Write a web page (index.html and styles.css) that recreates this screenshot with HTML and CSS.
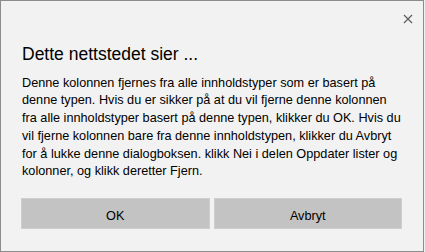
FILE: index.html
```html
<!DOCTYPE html>
<html lang="nb">
<head>
  <meta charset="UTF-8">
  <meta name="viewport" content="width=device-width, initial-scale=1.0">
  <title>Dette nettstedet sier</title>
  <link rel="stylesheet" href="styles.css">
</head>
<body>
  <div class="dialog">
    <div class="topbar">
      <button class="close" aria-label="Lukk">
        <svg width="10" height="10" viewBox="0 0 10 10">
          <path d="M1 1 L9 9 M9 1 L1 9" stroke="#5a5a5a" stroke-width="1.1" fill="none"/>
        </svg>
      </button>
    </div>
    <h1 class="title">Dette nettstedet sier ...</h1>
    <p class="message">Denne kolonnen fjernes fra alle innholdstyper som er basert på denne typen. Hvis du er sikker på at du vil fjerne denne kolonnen fra alle innholdstyper basert på denne typen, klikker du OK. Hvis du vil fjerne kolonnen bare fra denne innholdstypen, klikker du Avbryt for å lukke denne dialogboksen. klikk Nei i delen Oppdater lister og kolonner, og klikk deretter Fjern.</p>
    <div class="buttons">
      <button class="btn">OK</button>
      <button class="btn">Avbryt</button>
    </div>
  </div>
</body>
</html>
```

FILE: styles.css
```css
body {
  margin: 0;
  padding: 0;
  font-family: "Liberation Sans", Arial, sans-serif;
  background-color: #f2f2f2;
}

.dialog {
  box-sizing: border-box;
  width: 424px;
  height: 252px;
  border: 1px solid #8c8c8c;
  background-color: #f2f2f2;
  padding: 0 20px 0 21px;
}

.topbar {
  display: flex;
  justify-content: flex-end;
  box-sizing: border-box;
  height: 42px;
  padding-top: 13px;
  margin-right: -10px;
}

.close {
  width: 10px;
  height: 10px;
  padding: 0;
  border: none;
  background: none;
  display: block;
}

.close svg {
  display: block;
}

.title {
  margin: 0;
  font-size: 17.5px;
  font-weight: normal;
  line-height: 22px;
  color: #000;
}

.message {
  margin: 9.75px 0 0 0;
  font-size: 12.7px;
  line-height: 17.7px;
  color: #000;
}

.buttons {
  display: flex;
  gap: 4px;
  margin: 17px 1px 0 -1px;
}

.btn {
  flex: 1;
  height: 31px;
  padding: 5px 0 0 0;
  border: 1px solid #cecece;
  background-color: #c3c3c3;
  font-family: inherit;
  font-size: 12.7px;
  color: #000;
}
```
